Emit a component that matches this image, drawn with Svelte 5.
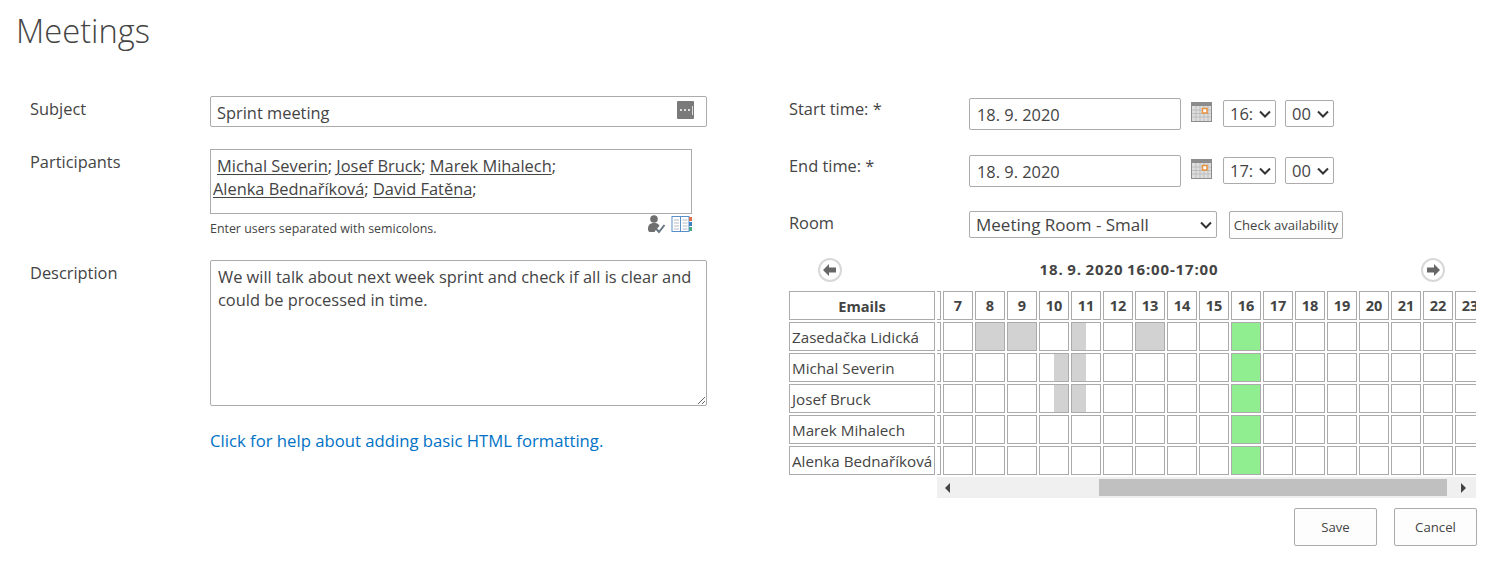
<script>
  const hours = [7,8,9,10,11,12,13,14,15,16,17,18,19,20,21,22,23];
  const rows = [
    { name: 'Zasedačka Lidická', busy: { 8: 'full', 9: 'full', 11: 'half-l', 13: 'full' } },
    { name: 'Michal Severin', busy: { 10: 'half-r', 11: 'half-l' } },
    { name: 'Josef Bruck', busy: { 10: 'half-r', 11: 'half-l' } },
    { name: 'Marek Mihalech', busy: {} },
    { name: 'Alenka Bednaříková', busy: {} }
  ];
</script>

<div class="page">
  <h1>Meetings</h1>
  <div class="columns">
    <section class="left">
      <div class="field subject">
        <span class="label">Subject</span>
        <div class="inputwrap">
          <input class="text wide" value="Sprint meeting" />
          <svg class="dots" width="18" height="18" viewBox="0 0 18 18">
            <rect width="17" height="18" rx="1" fill="#7a7a7a" />
            <rect x="3" y="8" width="2" height="2" fill="#ddd" /><rect x="7" y="8" width="2" height="2" fill="#ddd" /><rect x="11" y="8" width="2" height="2" fill="#ddd" />
            <rect x="15" y="5" width="1" height="9" fill="#ddd" />
          </svg>
        </div>
      </div>
      <div class="field participants">
        <span class="label">Participants</span>
        <div class="pwrap">
          <div class="pbox">
            <u>Michal Severin</u>; <u>Josef Bruck</u>; <u>Marek Mihalech</u>;<br />
            <u>Alenka Bednaříková</u>; <u>David Fatěna</u>;
          </div>
          <div class="hintrow">
            <span class="hint">Enter users separated with semicolons.</span>
            <span class="picons">
              <svg width="20" height="20" viewBox="0 0 20 20">
                <circle cx="7" cy="5" r="3.8" fill="#6f6f6f" />
                <path d="M1 15c0-4 2-6 6-6s5 1.500 5.500 3l-3 3-2 3H3c-1.500 0-2-1.500-2-3z" fill="#6f6f6f" />
                <path d="M9 14.500l3 3.500 5.500-7" fill="none" stroke="#66757f" stroke-width="2" />
              </svg>
              <svg class="book" width="22" height="18" viewBox="0 0 22 18">
                <rect x="1" y="1.500" width="8.500" height="15" fill="#fff" stroke="#5b8fc9" />
                <rect x="9.500" y="1.500" width="8.500" height="15" fill="#fff" stroke="#5b8fc9" />
                <path d="M3 5h5M3 8h5M3 11h5M3 14h5M11.500 5h5M11.500 8h5M11.500 11h5M11.500 14h5" stroke="#b4bcc6" />
                <rect x="18" y="2" width="3" height="4" fill="#d9704a" /><rect x="18" y="7" width="3" height="4" fill="#3f7fc4" /><rect x="18" y="12" width="3" height="4" fill="#4aa88a" />
              </svg>
            </span>
          </div>
        </div>
      </div>
      <div class="field description">
        <span class="label">Description</span>
        <div>
          <textarea class="area">We will talk about next week sprint and check if all is clear and could be processed in time.</textarea>
          <a class="help" href="#help">Click for help about adding basic HTML formatting.</a>
        </div>
      </div>
    </section>

    <section class="right">
      {#each [{ l: 'Start time: *', h: '16:' }, { l: 'End time: *', h: '17:' }] as t}
        <div class="timerow">
          <span class="rlabel">{t.l}</span>
          <input class="text date" value="18. 9. 2020" />
          <svg class="cal" width="21" height="20" viewBox="0 0 21 20">
            <rect width="21" height="20" fill="#8c8c8c" />
            <rect x="1" y="4" width="19" height="15" fill="#dedede" />
            <path d="M1 8h19M1 11.500h19M1 15h19M5 4v15M9 4v15M13 4v15M17 4v15" stroke="#bdbdbd" />
            <rect x="11.500" y="6.500" width="4.500" height="4.500" fill="#fff" stroke="#e8913f" stroke-width="1.500" />
          </svg>
          <div class="sel hour"><select><option>{t.h}</option></select><svg class="chev" width="12" height="8" viewBox="0 0 12 8"><path d="M1 1.500l5 5 5-5" /></svg></div>
          <div class="sel minute"><select><option>00</option></select><svg class="chev" width="12" height="8" viewBox="0 0 12 8"><path d="M1 1.500l5 5 5-5" /></svg></div>
        </div>
      {/each}
      <div class="roomrow">
        <span class="rlabel">Room</span>
        <div class="sel room"><select><option>Meeting Room - Small</option></select><svg class="chev" width="12" height="8" viewBox="0 0 12 8"><path d="M1 1.500l5 5 5-5" /></svg></div>
        <button class="check">Check availability</button>
      </div>

      <div class="nav">
        <button class="circle" aria-label="Previous">
          <svg width="14" height="12" viewBox="0 0 14 12"><path d="M0 6l6-6v3.500h7v5H6V12z" fill="#666" /></svg>
        </button>
        <strong>18. 9. 2020 16:00-17:00</strong>
        <button class="circle" aria-label="Next">
          <svg width="14" height="12" viewBox="0 0 14 12"><path d="M14 6L8 0v3.500H1v5h7V12z" fill="#666" /></svg>
        </button>
      </div>

      <div class="sched">
        <div class="names">
          <div class="cell namehead">Emails</div>
          {#each rows as r}<div class="cell name">{r.name}</div>{/each}
        </div>
        <div class="scroller">
          <div class="viewport">
            <div class="track">
              <div class="gridrow">
                <div class="cell hour-cell"></div>
                {#each hours as h}<div class="cell hour-cell">{h}</div>{/each}
              </div>
              {#each rows as r}
                <div class="gridrow">
                  <div class="cell slot"></div>
                  {#each hours as h}
                    <div class="cell slot {r.busy[h] ?? ''}" class:meet={h === 16}></div>
                  {/each}
                </div>
              {/each}
            </div>
          </div>
          <div class="sbar">
            <svg width="6" height="10" viewBox="0 0 6 10"><path d="M5 0v10L0 5z" fill="#444" /></svg>
            <div class="sthumbtrack"><div class="sthumb"></div></div>
            <svg width="6" height="10" viewBox="0 0 6 10"><path d="M0 0v10l5-5z" fill="#444" /></svg>
          </div>
        </div>
      </div>

      <div class="actions">
        <button class="act">Save</button>
        <button class="act">Cancel</button>
      </div>
    </section>
  </div>
</div>

<style>
  :global(body) { margin: 0; background: #fff; }
  .page {
    width: 1508px; height: 569px; overflow: hidden; box-sizing: border-box;
    font-family: "Open Sans", "Noto Sans", sans-serif; font-size: 16.400px; color: #444;
  }
  h1 {
    margin: 0; padding: 9px 0 0 16px; height: 96px; box-sizing: border-box;
    font-weight: 300; font-size: 32.700px; line-height: 44px; color: #444;
  }
  .columns { display: flex; }
  .left { width: 707px; padding-left: 30px; box-sizing: border-box; }
  .field { display: flex; }
  .label { width: 180px; flex: none; line-height: 24px; }
  input, select, textarea, button { font-family: inherit; color: #444; }
  .text {
    box-sizing: border-box; border: 1px solid #ababab; border-radius: 2px;
    font-size: 16.400px; padding: 0 7px; background: #fff; outline: none;
  }
  .subject { height: 53px; }
  .subject .label { margin-top: 1px; }
  .inputwrap { position: relative; }
  .wide { width: 497px; height: 31px; padding: 1px 6px 0; }
  .dots { position: absolute; right: 12px; top: 5px; }
  .participants { height: 111px; }
  .participants .label { margin-top: 1px; }
  .pwrap { width: 482px; }
  .pbox {
    box-sizing: border-box; height: 65px; border: 1px solid #ababab; padding: 4px 2px 0 2px;
    line-height: 23px; background: #fff; text-indent: 4px; white-space: nowrap;
  }
  .pbox u { text-underline-offset: 2px; text-decoration-thickness: 1px; }
  .hintrow { display: flex; justify-content: space-between; height: 30px; }
  .hint { font-size: 12.400px; line-height: 15px; margin-top: 7px; }
  .picons { display: flex; gap: 4px; align-items: flex-start; height: 20px; margin-right: -1px; }
  .book { margin-top: 1px; }
  .area {
    display: block; box-sizing: border-box; width: 497px; height: 146px; border: 1px solid #ababab;
    border-radius: 2px; font-size: 16.400px; line-height: 23px; padding: 4px 7px; outline: none; resize: both;
  }
  .description .label { margin-top: 1px; }
  .help { display: block; margin-top: 24px; color: #0072c6; text-decoration: none; line-height: 22px; font-size: 16.700px; }

  .right { margin-left: 82px; width: 690px; }
  .rlabel { width: 180px; flex: none; line-height: 24px; }
  .timerow { display: flex; height: 57px; align-items: flex-start; padding-top: 2px; box-sizing: border-box; }
  .timerow .rlabel { margin-top: -1px; }
  .date { width: 212px; height: 32px; }
  .cal { margin: 4px 0 0 10px; }
  .sel { position: relative; margin-top: 2px; }
  .sel select {
    appearance: none; display: block; box-sizing: border-box; width: 100%; height: 27px;
    border: 1px solid #ababab; border-radius: 2px; background: #fff; font-size: 16.500px;
    padding: 0 0 0 6px; outline: none;
  }
  .room select { font-size: 17px; }
  .chev { position: absolute; right: 5px; top: 10px; pointer-events: none; }
  .chev path { fill: none; stroke: #333; stroke-width: 2; }
  .hour { width: 53px; margin-left: 11px; }
  .minute { width: 49px; margin-left: 9px; }
  .roomrow { display: flex; height: 43px; margin-top: 1px; align-items: flex-start; }
  .room { width: 248px; margin-top: 0; }
  .check {
    margin-left: 12px; width: 114px; height: 28px; padding: 0; border: 1px solid #ababab;
    border-radius: 2px; background: #fdfdfd; font-size: 13.100px; white-space: nowrap;
  }
  .nav {
    display: flex; align-items: flex-start; justify-content: space-between;
    width: 656px; height: 37px; padding: 4px 0 0 29px; box-sizing: border-box;
  }
  .nav strong { font-size: 15px; line-height: 22px; color: #444; font-weight: 700; letter-spacing: 0.85px; word-spacing: -1px; margin-right: 5px; }
  .circle {
    width: 24px; height: 24px; padding: 0; border-radius: 50%; border: 2px solid #d8d8d8;
    background: #fff; display: flex; align-items: center; justify-content: center;
    box-sizing: border-box;
  }
  .sched { display: flex; gap: 2px; }
  .names { width: 146px; display: flex; flex-direction: column; gap: 2px; }
  .cell { box-sizing: border-box; border: 1px solid #ababab; height: 29px; background: #fff; }
  .namehead { font-weight: 700; text-align: center; font-size: 14.600px; line-height: 28px; }
  .name { font-size: 15.200px; line-height: 28px; padding-left: 2px; white-space: nowrap; overflow: hidden; }
  .scroller { width: 539px; }
  .viewport { overflow: hidden; }
  .track { margin-left: -26px; display: flex; flex-direction: column; gap: 2px; }
  .gridrow { display: flex; gap: 2px; width: 700px; }
  .gridrow .cell { width: 30px; flex: none; }
  .hour-cell { font-weight: 700; text-align: center; font-size: 14.500px; line-height: 28px; white-space: nowrap; overflow: hidden; }
  .full { background: #d2d2d2; }
  .half-l { background: linear-gradient(to right, #d2d2d2 50%, #fff 50%); }
  .half-r { background: linear-gradient(to right, #fff 50%, #d2d2d2 50%); }
  .meet { background: #90ee90; }
  .sbar {
    margin-top: 2px; height: 21px; background: #f0f0f0; display: flex; align-items: center;
    padding: 0 9px 0 8px; box-sizing: border-box;
  }
  .sthumbtrack { flex: 1; height: 17px; margin: 0 14px 0 0; padding-left: 148px; box-sizing: border-box; }
  .sthumb { height: 17px; background: #c0c0c0; }
  .actions { display: flex; justify-content: flex-end; gap: 17px; width: 688px; margin-top: 10px; }
  .act {
    width: 83px; height: 38px; border: 1px solid #ababab; border-radius: 2px; background: #fdfdfd;
    font-size: 13.200px; padding: 0;
  }
</style>
